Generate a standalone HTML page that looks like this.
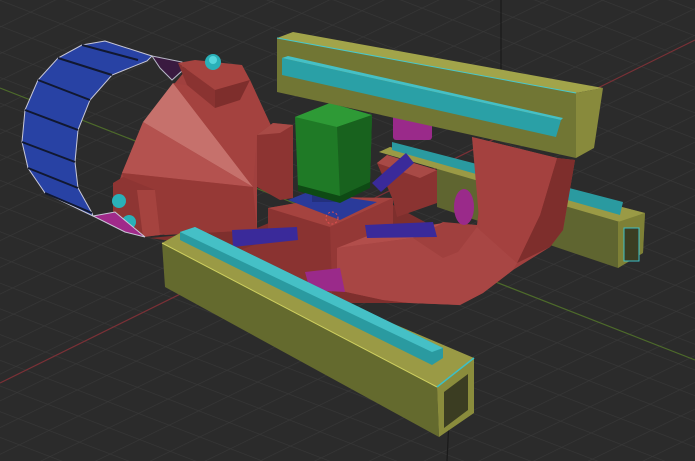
<!DOCTYPE html>
<html><head><meta charset="utf-8"><style>
html,body{margin:0;padding:0;background:#2a2a2a;}
svg{display:block}
</style></head><body>
<svg width="695" height="461" viewBox="0 0 695 461" xmlns="http://www.w3.org/2000/svg">
<defs>
<pattern id="ga" width="24" height="24" patternUnits="userSpaceOnUse" patternTransform="rotate(-26)">
<line x1="0" y1="0" x2="24" y2="0" stroke="#383838" stroke-width="1.2"/></pattern>
<pattern id="gb" width="24" height="24" patternUnits="userSpaceOnUse" patternTransform="rotate(21)">
<line x1="0" y1="0" x2="24" y2="0" stroke="#383838" stroke-width="1.2"/></pattern>
</defs>
<rect width="695" height="461" fill="#2b2b2b"/>
<rect width="695" height="461" fill="url(#ga)"/>
<rect width="695" height="461" fill="url(#gb)"/>
<line x1="0" y1="383" x2="695" y2="40" stroke="#7a3036" stroke-width="1.2"/>
<line x1="0" y1="88" x2="695" y2="360" stroke="#4d6a2a" stroke-width="1.2"/>
<line x1="501" y1="0" x2="501" y2="120" stroke="#1a1a1a" stroke-width="1.2"/>
<line x1="449" y1="420" x2="447" y2="461" stroke="#1a1a1a" stroke-width="1.2"/>

<!-- back right yellow bar -->
<polygon points="379,152 390,147 645,213 643,253 618,268 437,207 437,167" fill="#5f6530"/>
<polygon points="379,152 390,147 645,213 620,222" fill="#9a9a45"/>
<polygon points="618,222 645,213 643,253 618,268" fill="#7e8036"/>
<rect x="624" y="228" width="15" height="33" fill="#3b3d22" stroke="#3cc0c8"/>
<polygon points="392,142 623,202 620,215 392,150" fill="#2a9aa0"/>

<!-- magenta cylinder top -->
<rect x="393" y="115" width="39" height="25" rx="3" fill="#9a2a8a"/>

<!-- ring back band -->
<polygon points="152,56 182,62 183,70 172,80 160,68" fill="#3a1a40" stroke="#b8b8c8" stroke-width="1"/>

<!-- lower red filler -->
<polygon points="150,238 257,228 300,210 393,205 440,230 410,303 330,303 290,290 250,265 200,245" fill="#7e2f2d"/>

<!-- red body fan -->
<polygon points="122,173 145,120 175,83 190,65 250,80 273,130 257,135 257,230 157,235 140,225 113,200" fill="#a0403e"/>
<polygon points="143,122 173,83 253,187" fill="#c6716c"/>
<polygon points="122,173 143,122 253,187" fill="#b4524f"/>
<polygon points="173,83 215,90 250,80 273,130 257,135 253,187" fill="#a4423f"/>
<polygon points="122,173 253,187 257,230 165,235 140,225" fill="#963936"/>
<polygon points="257,135 273,123 293,125 293,198 280,200 257,187" fill="#8d3432"/>
<polygon points="257,135 273,123 293,125 280,133" fill="#a84a46"/>
<polygon points="178,63 195,60 242,65 250,80 215,90" fill="#a5433f"/>
<polygon points="178,63 215,90 215,108 187,85" fill="#8a3331"/>
<polygon points="215,90 250,80 240,100 215,108" fill="#7e2e2c"/>
<circle cx="213" cy="62" r="8" fill="#2ab0b8"/>
<circle cx="213" cy="60" r="4" fill="#55d6dc"/>
<!-- left small box -->
<polygon points="113,183 123,177 155,190 160,235 143,237 113,225" fill="#8e3533"/>
<polygon points="137,190 155,190 160,235 143,237" fill="#a5433f"/>
<circle cx="119" cy="201" r="7" fill="#2ab0b8"/>
<circle cx="129" cy="222" r="7" fill="#2ab0b8"/>

<!-- center block -->
<polygon points="268,208 330,197 393,198 393,262 337,275 330,300 270,275 240,250 268,240" fill="#8a3331"/>
<polygon points="268,208 330,197 393,198 330,227" fill="#a5433f"/>
<polygon points="330,227 393,198 393,262 332,285" fill="#943836"/>
<polygon points="377,163 387,155 437,170 437,203 397,217 393,200" fill="#8a3331"/>
<polygon points="377,163 387,155 437,170 420,178" fill="#a84a46"/>

<!-- J -->
<polygon points="472,137 557,158 575,160 563,230 550,247 513,270 483,293 460,305 410,303 383,300 337,290 337,248 413,238 443,222 477,225 480,200" fill="#a0403e"/>
<polygon points="337,248 413,238 443,258 458,252 477,227 480,230 517,263 513,270 483,293 460,305 410,303 383,300 337,290" fill="#a84644"/>
<polygon points="557,158 575,160 563,230 550,247 517,263 540,215" fill="#7e2e2c"/>
<polygon points="472,137 557,158 540,215 517,263 480,230" fill="#a4413f"/>
<polygon points="337,248 370,235 443,223 413,238" fill="#b24e4b"/>
<ellipse cx="464" cy="207" rx="10" ry="18" fill="#9a2a8a"/>
<polygon points="305,272 340,268 345,292 310,290" fill="#9a2a8a"/>

<!-- green box & blue base -->
<polygon points="288,200 308,192 377,202 340,220" fill="#2a3a9a"/>
<rect x="312" y="190" width="28" height="12" fill="#23307e"/>
<polygon points="295,117 330,103 372,115 370,183 340,198 298,187" fill="#1f7a26"/>
<polygon points="295,117 330,103 372,115 337,127" fill="#2e9a36"/>
<polygon points="337,127 372,115 370,183 340,198" fill="#18621e"/>
<polygon points="298,185 340,196 370,182 370,188 340,203 298,191" fill="#0e4a14"/>
<circle cx="332" cy="218" r="6" fill="none" stroke="#e05050" stroke-dasharray="2 2"/>

<!-- purple bars -->
<polygon points="232,230 297,227 298,240 233,247" fill="#3a2a9a"/>
<polygon points="365,225 433,222 437,237 367,238" fill="#3a2a9a"/>
<polygon points="372,183 406,153 414,163 381,192" fill="#3a2a9a"/>

<!-- blue ring -->
<path d="M82,45 L105,41 L152,56 L147,61 L112,75 L90,100 L78,130 L75,162 L78,188 L92,213 L93,216 L45,193 L28,168 L22,142 L25,110 L38,80 L58,58 Z" fill="#2842a4" stroke="#c8c8d8" stroke-width="1"/>
<path d="M58,58 L112,75 M38,80 L90,100 M25,110 L78,130 M22,142 L75,162 M28,168 L78,188 M45,193 L92,213 M82,45 L138,60" stroke="#111830" stroke-width="2"/>
<polygon points="93,216 115,212 145,237 125,232" fill="#a02a8a" stroke="#c8c8d8" stroke-width="1"/>

<!-- top yellow bar -->
<polygon points="277,38 576,93 576,158 277,92" fill="#717634"/>
<polygon points="277,38 293,32 603,88 576,93" fill="#a2a44a"/>
<polygon points="576,93 603,88 594,148 576,158" fill="#888a3c"/>
<line x1="277" y1="38" x2="576" y2="93" stroke="#49c8cc" stroke-width="1"/>
<polygon points="282,58 561,120 556,137 282,75" fill="#2aa0a6"/>
<polygon points="282,58 288,56 563,118 561,120" fill="#45c0c6"/>

<!-- bottom yellow bar -->
<polygon points="162,243 437,387 439,437 165,287" fill="#646a2e"/>
<polygon points="162,243 180,233 474,358 437,387" fill="#9a9a45"/>
<polygon points="437,387 474,358 474,413 439,437" fill="#8a8c3c"/>
<polygon points="444,392 468,374 468,410 444,428" fill="#3b3d22"/>
<line x1="162" y1="243" x2="437" y2="387" stroke="#cfd060" stroke-width="1"/>
<line x1="437" y1="387" x2="474" y2="358" stroke="#3cc0c8" stroke-width="1.5"/>
<polygon points="180,232 195,227 443,348 443,358 432,365 180,240" fill="#2a9aa0"/>
<polygon points="180,232 195,227 443,348 432,352" fill="#45c0c6"/>
</svg>
</body></html>
